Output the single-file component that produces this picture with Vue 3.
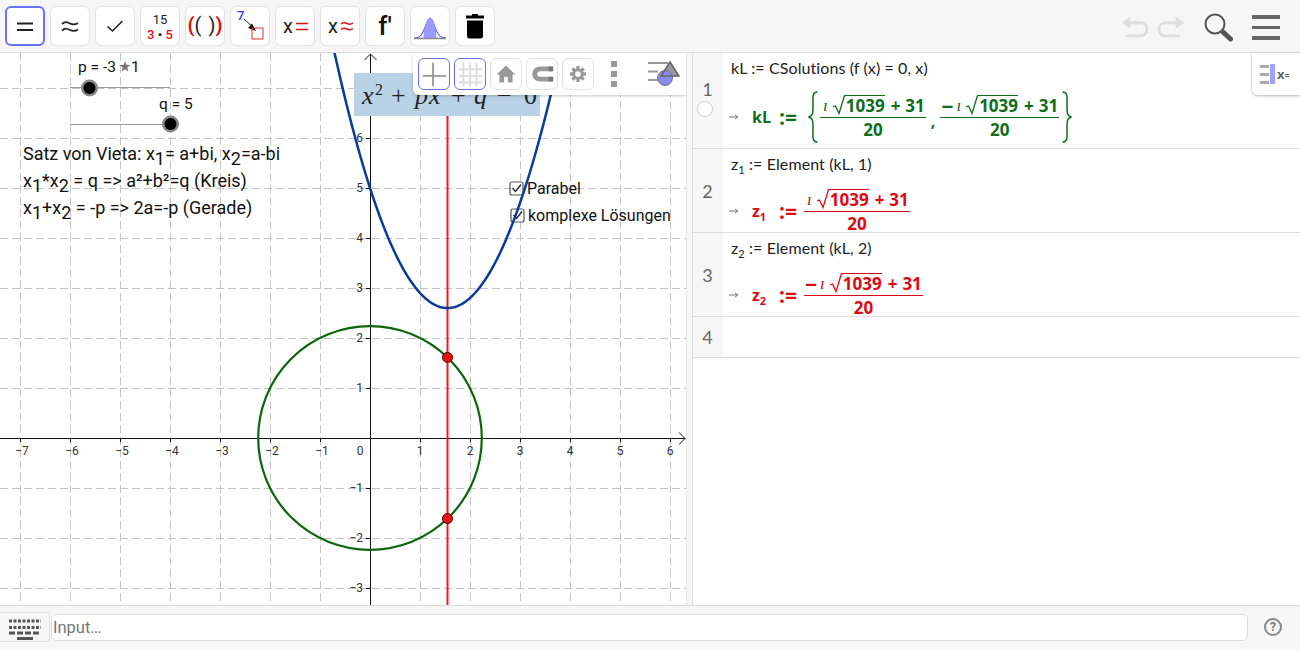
<script setup>
const xLabels = [-7, -6, -5, -4, -3, -2, -1, 1, 2, 3, 4, 5, 6]
const yLabels = [6, 5, 4, 3, 2, 1, -1, -2, -3]
const gridX = Array.from({ length: 14 }, (_, i) => 20 + i * 50)
const gridY = Array.from({ length: 11 }, (_, i) => 88 + i * 50)

const toX = (v) => 370 + v * 50
const toY = (v) => 438 - v * 50

// f(x) = x^2 - 3.1x + 5
const parabola = Array.from({ length: 111 }, (_, i) => {
  const x = -1 + i * 0.05
  return `${toX(x).toFixed(1)},${toY(x * x - 3.1 * x + 5).toFixed(1)}`
}).join(' ')

const rows = [
  { n: 1, cls: 'row-1', marble: true, lhs: 'kL', sub: '', color: 'green', input: 'CSolutions (f (x) = 0, x)', inputName: 'kL', braces: true, fractions: [false, true] },
  { n: 2, cls: 'row-2', lhs: 'z', sub: '1', color: 'red', input: 'Element (kL, 1)', inputName: 'z', braces: false, fractions: [false] },
  { n: 3, cls: 'row-2', lhs: 'z', sub: '2', color: 'red', input: 'Element (kL, 2)', inputName: 'z', braces: false, fractions: [true] },
]
</script>

<template>
  <div class="app">
    <header class="toolbar">
      <button class="tool selected">
        <svg viewBox="2 2 36 36"><path d="M12 17.500h16M12 24h16" stroke="#222" stroke-width="2" /></svg>
      </button>
      <button class="tool">
        <svg viewBox="1 1 38 38"><path d="M12 18c3-3 5-2 8-.5s5 1.500 8-.5M12 24.500c3-3 5-2 8-.5s5 1.500 8-.5" fill="none" stroke="#222" stroke-width="1.800" /></svg>
      </button>
      <button class="tool">
        <svg viewBox="1 1 38 38"><path d="M12.500 20.500l5 4.500 10-10" fill="none" stroke="#222" stroke-width="1.600" /></svg>
      </button>
      <button class="tool">
        <svg viewBox="1 1 38 38">
          <text x="20" y="18" class="t13" fill="#222">15</text>
          <text x="20" y="33" class="t13 bold" fill="#e01010">3 <tspan fill="#222">•</tspan> 5</text>
        </svg>
      </button>
      <button class="tool">
        <svg viewBox="1 1 38 38">
          <text x="6" y="26" class="t17" fill="#e01010" font-weight="700">(</text>
          <text x="13" y="26" class="t17" fill="#222">(</text>
          <text x="27" y="26" class="t17" fill="#222">)</text>
          <text x="34" y="26" class="t17" fill="#e01010" font-weight="700">)</text>
        </svg>
      </button>
      <button class="tool">
        <svg viewBox="1 1 38 38">
          <text x="7" y="14" class="t12" fill="#3333ee">7</text>
          <path d="M14 13l11 10" stroke="#222" stroke-width="1" />
          <path d="M26 25l-8-3 4-4.500z" fill="#111" />
          <rect x="22" y="22" width="11" height="11" fill="none" stroke="#e03030" stroke-width="1" />
        </svg>
      </button>
      <button class="tool">
        <svg viewBox="1 1 38 38">
          <text x="8" y="27" class="t17" text-anchor="start" fill="#222">x</text>
          <path d="M21 17.500h12M21 23.500h12" stroke="#e01010" stroke-width="1.600" />
        </svg>
      </button>
      <button class="tool">
        <svg viewBox="1 1 38 38">
          <text x="8" y="27" class="t17" text-anchor="start" fill="#222">x</text>
          <path d="M21 18c2.500-2 4-1.500 6-.5s4 1 6-.5M21 23.500c2.500-2 4-1.500 6-.5s4 1 6-.5" fill="none" stroke="#e01010" stroke-width="1.400" />
        </svg>
      </button>
      <button class="tool">
        <svg viewBox="1 1 38 38"><text x="20" y="29" class="t20" fill="#111">f′</text></svg>
      </button>
      <button class="tool">
        <svg viewBox="1 1 38 38">
          <path d="M4 32c6 0 8-3 11-11s4-9 5-9 2.500 2 5 9 5 11 11 11" fill="#c8c8ff" fill-opacity=".5" stroke="#4444cc" stroke-width="1" />
          <path d="M14 24v8h12v-8c-2-8-4-12-6-12s-4 4-6 12z" fill="#9999ff" />
          <path d="M4 32.500h32" stroke="#888" stroke-width="1.500" />
        </svg>
      </button>
      <button class="tool">
        <svg viewBox="1 1 38 38">
          <path d="M11 9.500h18v3H11zM17 9.500V8h6v1.500z" fill="#000" />
          <path d="M12 14.500h16v15.500q0 2.500-2.500 2.500h-11q-2.500 0-2.500-2.500z" fill="#000" />
        </svg>
      </button>

      <div class="toolbar-right">
        <svg class="undo" viewBox="0 0 30 24" width="28" height="23">
          <path d="M3 8h18c9 0 9 14 0 14H5" fill="none" stroke="#dedede" stroke-width="3" />
          <path d="M1 8l9-6.500v13z" fill="#dedede" />
        </svg>
        <svg class="redo" viewBox="0 0 30 24" width="28" height="23">
          <path d="M27 8H9c-9 0-9 14 0 14h16" fill="none" stroke="#dedede" stroke-width="3" />
          <path d="M29 8l-9-6.500v13z" fill="#dedede" />
        </svg>
        <svg class="search" viewBox="0 0 30 30" width="30" height="30">
          <circle cx="12" cy="12" r="9.500" fill="none" stroke="#555" stroke-width="2" />
          <path d="M20 20l7.500 7" stroke="#555" stroke-width="5" stroke-linecap="round" />
        </svg>
        <div class="hamburger"><i></i><i></i><i></i></div>
      </div>
    </header>

    <main class="workspace">
      <section class="graphics">
        <svg class="canvas" viewBox="0 53 686 552" width="686" height="552">
          <g stroke="#c4c4c4" stroke-width="1" stroke-dasharray="8 4">
            <path v-for="x in gridX" :key="'gx' + x" :d="`M${x + 0.5} 53V605`" />
            <path v-for="y in gridY" :key="'gy' + y" :d="`M0 ${y + 0.5}H686`" />
          </g>

          <!-- axes -->
          <g stroke="#111" stroke-width="1" fill="none">
            <path d="M0 438.500H685M370.500 605V55" />
            <path d="M679 432.500l6 6-6 6M364.500 60l6-6 6 6" />
            <path v-for="v in xLabels" :key="'tx' + v" :d="`M${toX(v) + 0.5} 438v4`" />
            <path v-for="v in yLabels" :key="'ty' + v" :d="`M366 ${toY(v) + 0.5}h4`" />
          </g>
          <text v-for="v in xLabels" :key="'lx' + v" :x="toX(v) + (v < 0 ? 2 : 0)" y="455" class="tick">{{ v < 0 ? '−' + -v : v }}</text>
          <text x="360" y="455" class="tick">0</text>
          <text v-for="v in yLabels" :key="'ly' + v" x="363" :y="toY(v) + 4" class="tick end">{{ v < 0 ? '−' + -v : v }}</text>

          <!-- sliders -->
          <path d="M70 87.500H170M70 124.500H170" stroke="#999" stroke-width="1" />
          <circle cx="89.500" cy="88" r="8.500" fill="#888" />
          <circle cx="89.500" cy="88" r="6" fill="#000" />
          <circle cx="170.500" cy="124" r="8.500" fill="#888" />
          <circle cx="170.500" cy="124" r="6" fill="#000" />
          <text x="78" y="72" class="label">p = -3</text>
          <path d="M125 61l1.400 3.800 4 .2-3.100 2.500 1 3.900-3.300-2.200-3.300 2.200 1-3.900-3.100-2.500 4-.2z" fill="#777" />
          <text x="131" y="72" class="label">1</text>
          <text x="159" y="109" class="label">q = 5</text>

          <!-- checkboxes sit under the curve -->
          <g fill="#fff" fill-opacity=".6" stroke="#555" stroke-width="1.200">
            <rect x="510" y="182" width="13" height="13" rx="2" />
            <rect x="511" y="209" width="13" height="13" rx="2" />
          </g>
          <path d="M512.500 188l3 3.500 5.500-7M513.500 215l3 3.500 5.500-7" fill="none" stroke="#222" stroke-width="1.300" />
          <text x="527" y="194" class="text">Parabel</text>
          <text x="528" y="221" class="text">komplexe Lösungen</text>

          <!-- curves -->
          <path d="M447.500 53V605" stroke="#e02020" stroke-width="2" />
          <circle cx="370" cy="438" r="111.800" fill="none" stroke="#0b650b" stroke-width="2.200" />
          <polyline :points="parabola" fill="none" stroke="#0b3a9b" stroke-width="2.500" />
          <circle cx="447.500" cy="357.400" r="5" fill="#e81010" stroke="#500" stroke-width="1" />
          <circle cx="447.500" cy="518.600" r="5" fill="#e81010" stroke="#500" stroke-width="1" />

          <!-- equation label covers the axis and the line -->
          <rect x="354" y="73" width="186" height="43" fill="#bad2e6" />
          <text class="eq" y="104">
            <tspan x="362" font-style="italic">x</tspan>
            <tspan x="375" y="95" font-size="16">2</tspan>
            <tspan x="391" y="104">+</tspan>
            <tspan x="415" font-style="italic">p</tspan>
            <tspan x="429" font-style="italic">x</tspan>
            <tspan x="451">+</tspan>
            <tspan x="474" font-style="italic">q</tspan>
            <tspan x="497">−</tspan>
            <tspan x="524">0</tspan>
          </text>

          <!-- description -->
          <text class="text big">
            <tspan x="23" y="160">Satz von Vieta: x</tspan><tspan dy="5">1</tspan><tspan dy="-5">= a+bi, x</tspan><tspan dy="5">2</tspan><tspan dy="-5">=a-bi</tspan>
            <tspan x="23" y="187">x</tspan><tspan dy="5">1</tspan><tspan dy="-5">*x</tspan><tspan dy="5">2</tspan><tspan dy="-5"> = q => a²+b²=q (Kreis)</tspan>
            <tspan x="23" y="214">x</tspan><tspan dy="5">1</tspan><tspan dy="-5">+x</tspan><tspan dy="5">2</tspan><tspan dy="-5"> = -p => 2a=-p (Gerade)</tspan>
          </text>
        </svg>

        <div class="style-bar">
          <button class="mini active">
            <svg viewBox="0 0 32 32"><path d="M4 18h25M15 4v25" stroke="#999" stroke-width="2" /></svg>
          </button>
          <button class="mini active">
            <svg viewBox="0 0 32 32"><path d="M4 11h25M4 18h25M4 25h25M9 4v25M16 4v25M23 4v25" stroke="#ddd" stroke-width="2" /></svg>
          </button>
          <button class="mini">
            <svg viewBox="0 0 32 32"><path d="M16 7L6 16.500h3V25h5v-6h4v6h5v-8.500h3z" fill="#999" /></svg>
          </button>
          <button class="mini">
            <svg viewBox="0 0 32 32"><path d="M27 8H14C3 8 3 24 14 24h13v-5H14c-4 0-4-6 0-6h13z" fill="#999" /><path d="M23 8h5v5h-5zM23 19h5v5h-5z" fill="#777" /></svg>
          </button>
          <button class="mini">
            <svg viewBox="0 0 32 32"><path d="M16 7.500v17M7.500 16h17M10 10l12 12M22 10L10 22" stroke="#999" stroke-width="3.500" /><circle cx="16" cy="16" r="6" fill="#999" /><circle cx="16" cy="16" r="3" fill="#fff" /></svg>
          </button>
          <div class="dots"><i></i><i></i><i></i></div>
          <svg class="style-icon" viewBox="0 0 34 28" width="34" height="28">
            <path d="M0 3h20M0 11.500h10M0 20h10" stroke="#999" stroke-width="2.200" />
            <path d="M22 2l9 14H13z" fill="#999" />
            <circle cx="17" cy="18" r="7.500" fill="#8c8cf0" stroke="#777" stroke-width="1" />
            <path d="M22 2l9 14H13z" fill="none" stroke="#666" stroke-width="1.500" />
          </svg>
        </div>
      </section>

      <div class="divider"></div>

      <section class="algebra">
        <div v-for="row in rows" :key="row.n" class="row" :class="row.cls">
          <div class="num">
            {{ row.n }}
            <span v-if="row.marble" class="marble"></span>
          </div>
          <div class="cell">
            <div class="input-line">
              {{ row.inputName }}<sub v-if="row.sub">{{ row.sub }}</sub> := {{ row.input }}
            </div>
            <div class="output" :class="row.color">
              <svg class="out-arrow" viewBox="0 0 10 6" width="10" height="6"><path d="M0 3h8M6 1l3 2-3 2" fill="none" stroke="#777" stroke-width="1" /></svg>
              <span class="lhs">{{ row.lhs }}<sub v-if="row.sub">{{ row.sub }}</sub></span>
              <span class="assign">:=</span>
              <svg v-if="row.braces" class="brace" viewBox="0 0 12 52" width="12" height="52">
                <path d="M10.500 1C5 1 6 6 6 14s0 11-4.500 12C6 27 6 30 6 38s-1 13 4.500 13" fill="none" stroke="currentColor" stroke-width="1.500" />
              </svg>
              <template v-for="(minus, i) in row.fractions" :key="i">
                <span v-if="i > 0" class="comma">,</span>
                <span class="frac">
                  <span class="top">
                    <span v-if="minus" class="minus">−</span><span class="imag">ı</span>
                    <svg class="radical" viewBox="0 0 13 20" width="13" height="20"><path d="M0 12l2.500-1 3.500 7.500L11.500 .6H13" fill="none" stroke="currentColor" stroke-width="1.300" /></svg><span class="radicand">1039</span>
                    <span class="plus">+</span>31
                  </span>
                  <span class="bottom">20</span>
                </span>
              </template>
              <svg v-if="row.braces" class="brace flip" viewBox="0 0 12 52" width="12" height="52">
                <path d="M10.500 1C5 1 6 6 6 14s0 11-4.500 12C6 27 6 30 6 38s-1 13 4.500 13" fill="none" stroke="currentColor" stroke-width="1.500" />
              </svg>
            </div>
          </div>
        </div>
        <div class="row row-empty">
          <div class="num">4</div>
          <div class="cell"></div>
        </div>

        <div class="algebra-tab">
          <span class="tab-lines"><i></i><i></i><i></i></span>
          <span class="tab-bar"></span>
          <span class="tab-x">x<small>=</small></span>
        </div>
      </section>
    </main>

    <footer class="inputbar">
      <button class="keyboard">
        <svg viewBox="0 0 34 22" width="34" height="22">
          <path d="M1 3h32M1 9.500h32" stroke="#555" stroke-width="3" stroke-dasharray="3 1.500" />
          <path d="M1 15h32" stroke="#555" stroke-width="3" stroke-dasharray="6 2" />
          <path d="M9 20.500h16" stroke="#555" stroke-width="3" />
        </svg>
      </button>
      <div class="input-box">Input…</div>
      <span class="help">?</span>
    </footer>
  </div>
</template>

<style>
html, body { margin: 0; background: #fff; }
</style>

<style scoped>
.app {
  width: 1300px;
  height: 650px;
  display: flex;
  flex-direction: column;
  overflow: hidden;
  font-family: Roboto, "Liberation Sans", sans-serif;
  color: #222;
}

/* TOOLBAR */
.toolbar {
  height: 53px;
  flex: none;
  box-sizing: border-box;
  display: flex;
  gap: 5px;
  padding: 6px 0 0 5px;
  background: #f6f6f6;
  border-bottom: 1px solid #dcdcdc;
}
.tool {
  width: 40px;
  height: 40px;
  padding: 0;
  box-sizing: border-box;
  background: #fff;
  border: 1px solid #e2e2e2;
  border-radius: 6px;
}
.tool svg { display: block; width: 38px; height: 38px; }
.tool.selected { border: 2px solid #6a72f0; }
.tool.selected svg { width: 36px; height: 36px; }
.toolbar-right { margin-left: auto; display: flex; align-items: flex-start; }
.undo { margin: 9px 0 0 0; }
.redo { margin: 9px 0 0 8px; }
.search { margin: 6px 0 0 18px; }
.hamburger { margin: 9px 20px 0 19px; width: 28px; display: flex; flex-direction: column; gap: 7px; }
.hamburger i { display: block; height: 3.5px; background: #666; }

text { font-family: Roboto, "Liberation Sans", sans-serif; }
.t12 { font-size: 13px; font-weight: 500; }
.t13 { font-size: 13px; text-anchor: middle; }
.t17 { font-size: 20px; text-anchor: middle; }
.tool text[text-anchor="start"] { text-anchor: start; }
.t20 { font-size: 26px; font-weight: 500; text-anchor: middle; }
.bold { font-weight: 500; }

/* GRAPHICS */
.workspace { flex: 1; display: flex; min-height: 0; }
.graphics { width: 686px; flex: none; position: relative; overflow: hidden; }
.canvas { display: block; }
.tick { font-size: 12px; fill: #333; text-anchor: middle; }
.tick.end { text-anchor: end; }
.label { font-size: 15.500px; fill: #111; }
.text { font-size: 16px; fill: #111; }
.text.big { font-size: 18px; }
.eq { font-family: "Liberation Serif", serif; font-size: 26px; fill: #222; }

.style-bar {
  position: absolute;
  top: 0;
  right: 0;
  width: 273px;
  height: 42px;
  box-sizing: border-box;
  display: flex;
  align-items: center;
  gap: 4px;
  padding-left: 5px;
  background: #fff;
  border-radius: 0 0 0 6px;
  box-shadow: 0 1px 3px rgba(0, 0, 0, 0.22);
}
.mini {
  width: 32px;
  height: 32px;
  padding: 0;
  box-sizing: border-box;
  background: #fff;
  border: 1px solid #e2e2e2;
  border-radius: 6px;
}
.mini svg { display: block; width: 30px; height: 30px; }
.mini.active { border-color: #6a72f0; }
.dots { margin-left: 13px; width: 6px; display: flex; flex-direction: column; gap: 4px; }
.dots i { display: block; height: 6px; background: #999; }
.style-icon { margin-left: 27px; }

.divider {
  width: 7px;
  flex: none;
  background: #f6f6f6;
  border-left: 1px solid #e6e6e6;
  border-right: 1px solid #dcdcdc;
  box-sizing: border-box;
}

/* ALGEBRA */
.algebra { flex: 1; position: relative; font-family: Lato, "Open Sans", sans-serif; }
.row { display: flex; border-bottom: 1px solid #dcdcdc; box-sizing: border-box; }
.row-1 { height: 96px; }
.row-2 { height: 84px; }
.row-empty { height: 41px; }
.num {
  width: 30px;
  flex: none;
  position: relative;
  background: #f6f6f6;
  color: #666;
  font-size: 18px;
  text-align: center;
  display: flex;
  align-items: center;
  justify-content: center;
  padding-right: 1px;
  box-sizing: border-box;
}
.row-1 .num { padding-bottom: 24px; }
.marble {
  position: absolute;
  left: 4px;
  top: 48px;
  width: 16px;
  height: 16px;
  background: #fff;
  border: 1.500px solid #ccc;
  border-radius: 50%;
  box-sizing: border-box;
}
.cell { flex: 1; padding-left: 8px; min-width: 0; }
.input-line { height: 22px; padding-top: 5px; font-size: 16px; letter-spacing: 0.1px; line-height: 20px; color: #222; white-space: pre; }
.input-line sub { font-size: 11px; line-height: 0; }
.output { display: flex; align-items: center; font-family: "Open Sans", sans-serif; font-weight: 700; }
.row-1 .output { height: 54px; margin-top: 10px; }
.row-2 .output { height: 52px; margin-top: 9px; }
.output.green { color: #0f6e1c; }
.output.red { color: #dc0a14; }
.out-arrow { margin-left: -2px; margin-right: 13px; flex: none; }
.lhs { font-size: 16px; min-width: 19px; }
.lhs sub { font-size: 11px; line-height: 0; }
.assign { font-size: 21px; margin: 0 6px 0 8px; line-height: 1; min-width: 19px; }
.brace { flex: none; margin-left: 3px; margin-right: 1px; }
.brace.flip { transform: scaleX(-1); margin-left: 2px; margin-right: 0; }
.comma { align-self: center; font-size: 16px; margin: 8px 5px 0 5px; }
.frac { display: inline-flex; flex-direction: column; align-items: center; }
.top { display: flex; align-items: flex-end; font-size: 17px; line-height: 20px; height: 23px; padding: 0 1px 1px; border-bottom: 1px solid currentColor; white-space: nowrap; }
.bottom { font-size: 17px; line-height: 23px; }
.minus { margin-right: 1px; font-size: 21px; }
.imag { margin: 0 5px 0 2px; font-family: "Liberation Serif", serif; font-style: italic; font-weight: 400; }
.radical { flex: none; margin-bottom: 1px; }
.radicand { border-top: 1px solid currentColor; line-height: 20px; }
.plus { margin: 0 5px 0 6px; }

.algebra-tab {
  position: absolute;
  top: 0;
  right: 0;
  width: 48px;
  height: 42px;
  box-sizing: border-box;
  display: flex;
  align-items: center;
  padding-left: 8px;
  background: #fff;
  border-radius: 0 0 0 6px;
  box-shadow: 0 1px 3px rgba(0, 0, 0, 0.3);
}
.tab-lines { width: 9px; display: flex; flex-direction: column; gap: 5px; margin-right: 1px; }
.tab-lines i { display: block; height: 3px; background: #aaa; }
.tab-bar { width: 5px; height: 20px; background: #a0a0ff; border-radius: 1px; }
.tab-x { margin-left: 2px; font-family: "Open Sans", sans-serif; font-weight: 700; font-size: 13px; color: #666; }
.tab-x small { font-size: 9px; }

/* INPUT */
.inputbar {
  height: 45px;
  flex: none;
  box-sizing: border-box;
  display: flex;
  align-items: flex-start;
  background: #f6f6f6;
  border-top: 1px solid #dcdcdc;
}
.keyboard {
  width: 50px;
  height: 30px;
  margin-top: 6px;
  padding: 3px 0 0;
  box-sizing: border-box;
  background: #f6f6f6;
  border: 1px solid #e2e2e2;
  border-left: 0;
}
.keyboard svg { display: block; margin: 0 auto; }
.input-box {
  width: 1197px;
  height: 27px;
  margin: 8px 0 0 1px;
  box-sizing: border-box;
  padding-left: 1px;
  background: #fff;
  border: 1px solid #dcdcdc;
  border-radius: 5px;
  font-size: 16.500px;
  line-height: 25px;
  color: #777;
}
.help {
  width: 18px;
  height: 18px;
  margin: 12px 0 0 16px;
  box-sizing: border-box;
  border: 2px solid #888;
  border-radius: 50%;
  color: #777;
  font-size: 12px;
  font-weight: 700;
  line-height: 14px;
  text-align: center;
}
</style>
